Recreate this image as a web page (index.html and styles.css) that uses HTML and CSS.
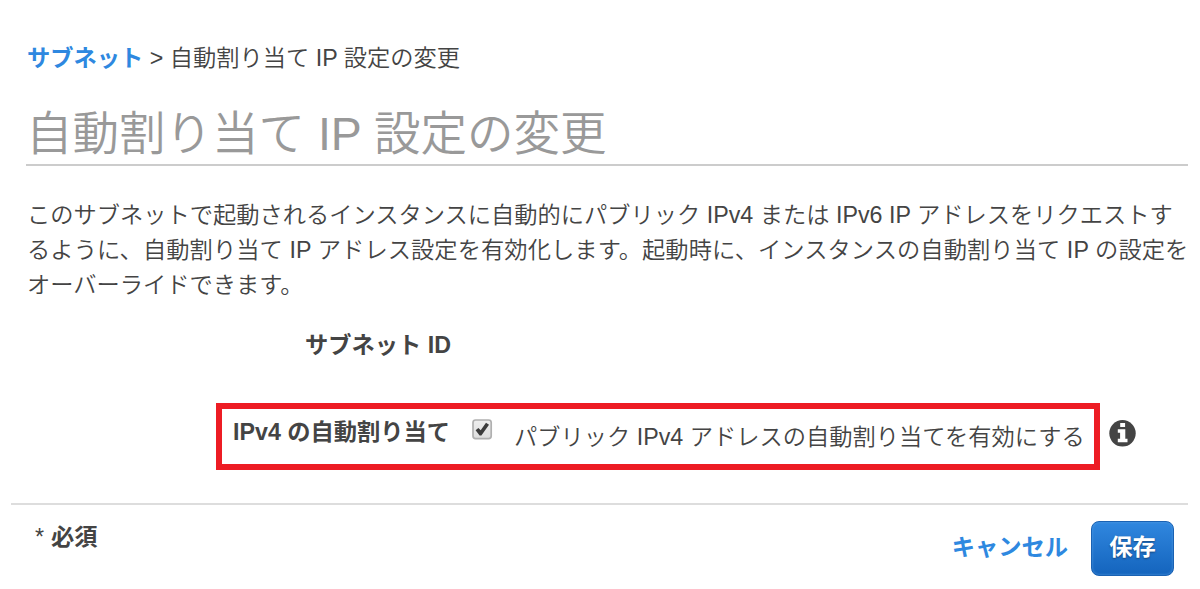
FILE: index.html
```html
<!DOCTYPE html>
<html lang="ja">
<head>
<meta charset="utf-8">
<title>自動割り当て IP 設定の変更</title>
<link rel="stylesheet" href="styles.css">
</head>
<body>
<main class="page">
  <nav class="breadcrumb"><a class="crumb-link" href="#">サブネット</a><span class="sep">&gt;</span><span class="crumb-current">自動割り当て IP 設定の変更</span></nav>
  <h1 class="title"><span class="title-text">自動割り当て IP 設定の変更</span></h1>
  <div class="description">
    <div class="line line-1">このサブネットで起動されるインスタンスに自動的にパブリック IPv4 または IPv6 IP アドレスをリクエストす</div>
    <div class="line line-2">るように、自動割り当て IP アドレス設定を有効化します。起動時に、インスタンスの自動割り当て IP の設定を</div>
    <div class="line line-3">オーバーライドできます。</div>
  </div>
  <div class="subnet-row">サブネット ID</div>
  <div class="assign-row">
    <div class="highlight">
      <span class="assign-label">IPv4 の自動割り当て</span>
      <svg class="checkbox" width="22" height="22" viewBox="0 0 22 22"><defs><linearGradient id="box" x2="0" y2="1"><stop stop-color="#eeeeee"/><stop offset="1" stop-color="#dedede"/></linearGradient></defs><rect x="1" y="1" width="18.2" height="18.6" rx="2.6" fill="url(#box)" stroke="#b0b0b0" stroke-width="1.7"/><path d="M3.6 11.2l2.8-2.3 2.3 2.3 5.3-7.4 3 2L9.4 16.4H7.6z" fill="#3c3c3c"/></svg>
      <span class="assign-text">パブリック IPv4 アドレスの自動割り当てを有効にする</span>
    </div>
    <svg class="info" width="27" height="27" viewBox="0 0 27 27"><circle cx="13.5" cy="13.3" r="13.2" fill="#444"/><path d="M11.2 3h4.9v4h-4.9zM8.8 9.3h7.5v9.4h2.2v3.5H8.8v-3.5h2.3v-6H8.8z" fill="#fff"/></svg>
  </div>
  <footer class="footer">
    <div class="required"><span class="star">*</span>必須</div>
    <div class="actions"><a class="cancel" href="#">キャンセル</a><button class="save">保存</button></div>
  </footer>
</main>
</body>
</html>
```
FILE: styles.css
```css
* { box-sizing: border-box; }
body { margin: 0; background: #fff; color: #444; font-family: "Liberation Sans", "Noto Sans CJK JP", sans-serif; font-size: 23.25px; font-weight: 350; }
.page { height: 589px; overflow: hidden; padding-top: 41px; display: flex; flex-direction: column; }
a { text-decoration: none; color: #2e88e0; font-weight: bold; }
.breadcrumb { height: 34px; line-height: 34px; padding-left: 27px; display: flex; white-space: nowrap; }
.sep { margin: 0 6.5px; }
.title { margin: 25px 12px 0 26px; height: 66px; line-height: 68px; border-bottom: 2px solid #ccc; font-weight: 350; font-size: 46.5px; color: #999; white-space: nowrap; }
.description { margin: 32px 0 0 27px; }
.line { height: 35px; line-height: 35px; white-space: nowrap; }
.line-2 { letter-spacing: 0.08px; }
.subnet-row { margin: 25px 0 0 305px; height: 35px; line-height: 35px; font-weight: bold; }
.assign-row { margin: 40px 0 0 216px; display: flex; height: 67px; }
.highlight { width: 884px; height: 67px; border: 6px solid #ed1c24; display: flex; padding-left: 11px; white-space: nowrap; }
.assign-label { width: 239px; font-weight: bold; line-height: 46px; }
.checkbox { margin-top: 10px; }
.assign-text { margin-left: 20px; line-height: 56px; }
.info { margin: 17px 0 0 9px; }
.footer { margin: 33px 12px 0 11px; border-top: 2px solid #ddd; display: flex; justify-content: space-between; }
.required { padding-left: 24px; margin-top: 15px; height: 34px; line-height: 34px; font-weight: bold; }
.star { font-weight: normal; margin-right: 7px; }
.actions { display: flex; padding: 16px 14px 0 0; }
.cancel { line-height: 53px; margin-right: 23px; }
.save { width: 83px; height: 55px; padding: 0 0 7px; border: 1.5px solid #1a62b3; border-radius: 8px; background: linear-gradient(#3087df, #1464bd); box-shadow: inset 0 0 2px 1px rgba(90, 160, 230, 0.4); color: #fff; font: bold 23.25px "Liberation Sans", "Noto Sans CJK JP", sans-serif; text-shadow: 0 1px 2px rgba(0, 0, 0, 0.4); }
```
